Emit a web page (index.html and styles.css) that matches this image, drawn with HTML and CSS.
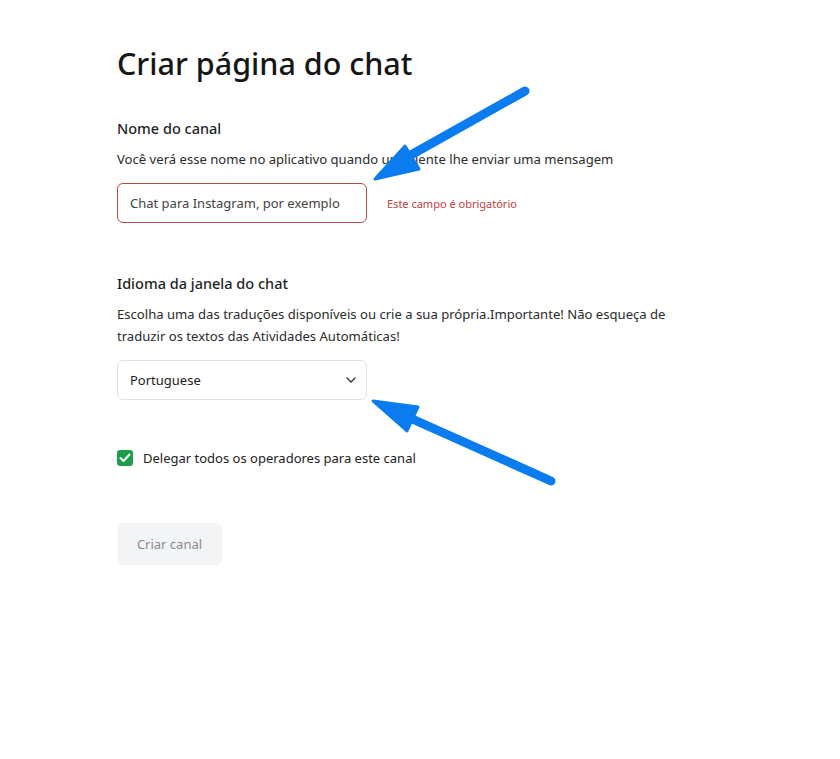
FILE: index.html
```html
<!DOCTYPE html>
<html lang="pt">

<head>
    <meta charset="UTF-8">
    <meta name="viewport" content="width=device-width, initial-scale=1.0">
    <title>Criar página do chat</title>
    <link rel="stylesheet" href="styles.css">
</head>

<body>
    <div class="page">
        <h1 class="title">Criar página do chat</h1>

        <div class="field">
            <div class="field-label">Nome do canal</div>
            <p class="field-hint">Você verá esse nome no aplicativo quando um cliente lhe enviar uma mensagem</p>
            <div class="input-row">
                <div class="input input-error">Chat para Instagram, por exemplo</div>
                <span class="error-text">Este campo é obrigatório</span>
            </div>
        </div>

        <div class="field">
            <div class="field-label">Idioma da janela do chat</div>
            <p class="field-hint">Escolha uma das traduções disponíveis ou crie a sua própria.Importante! Não esqueça de traduzir os textos das Atividades Automáticas!</p>
            <div class="input select">
                <span>Portuguese</span>
                <svg width="10" height="6" viewBox="0 0 10 6"><path d="M1 1l4 4 4-4" fill="none" stroke="#333" stroke-width="1.4" stroke-linecap="round" stroke-linejoin="round"/></svg>
            </div>
        </div>

        <label class="check">
            <span class="check-box">
                <svg width="12" height="10" viewBox="0 0 12 10"><path d="M1.5 5l3 3 6-6.5" fill="none" stroke="#fff" stroke-width="2" stroke-linecap="round" stroke-linejoin="round"/></svg>
            </span>
            Delegar todos os operadores para este canal
        </label>

        <button class="btn" disabled>Criar canal</button>
    </div>

    <!-- annotation arrows -->
    <svg class="arrows" width="840" height="759" viewBox="0 0 840 759">
        <g fill="#0a7cf0" stroke="#0a7cf0" stroke-linecap="round" stroke-linejoin="round">
            <path d="M525 91 L402 160" stroke-width="9" fill="none"/>
            <path d="M375 179 L405 146 L419 169 Z" stroke-width="3"/>
            <path d="M551 481 L410 418" stroke-width="9" fill="none"/>
            <path d="M373 401 L418 407 L407 431 Z" stroke-width="3"/>
        </g>
    </svg>
</body>

</html>
```

FILE: styles.css
```css
* {
    margin: 0;
    padding: 0;
    box-sizing: border-box;
}

body {
    background: #fff;
    color: #1f1f1f;
    font-family: "Noto Sans", "Open Sans", sans-serif;
}

.page {
    padding: 41px 0 0 117px;
    width: 700px;
}

.title {
    font-size: 30.5px;
    font-weight: 500;
    line-height: 44px;
    color: #161616;
    margin-bottom: 32px;
}

.field {
    margin-bottom: 49px;
}

.field-label {
    font-size: 14.5px;
    font-weight: 500;
    line-height: 22px;
    margin-bottom: 9px;
}

.field-hint {
    font-size: 13.1px;
    line-height: 22px;
    color: #2b2b2b;
    margin-bottom: 13px;
    width: 560px;
}

.input-row {
    display: flex;
    align-items: center;
    gap: 20px;
}

.input {
    width: 250px;
    height: 40px;
    border: 1px solid #e3e3e3;
    border-radius: 6px;
    padding: 0 12px;
    font-size: 13px;
    display: flex;
    align-items: center;
    color: #222;
}

.input-error {
    border-color: #b84a4a;
    color: #444;
}

.error-text {
    font-size: 11px;
    color: #c0413c;
}

.select {
    justify-content: space-between;
    padding-right: 10px;
}

.check {
    display: flex;
    align-items: center;
    gap: 10px;
    font-size: 13px;
    color: #222;
    margin-top: 0;
}

.check-box {
    width: 16px;
    height: 16px;
    border-radius: 3px;
    background: #1e9e4a;
    display: flex;
    align-items: center;
    justify-content: center;
}

.btn {
    margin-top: 56px;
    width: 105px;
    height: 42px;
    border: none;
    border-radius: 6px;
    background: #f3f4f6;
    color: #8a8a8a;
    font-family: inherit;
    font-size: 13px;
}

.arrows {
    position: absolute;
    left: 0;
    top: 0;
    pointer-events: none;
}
```
